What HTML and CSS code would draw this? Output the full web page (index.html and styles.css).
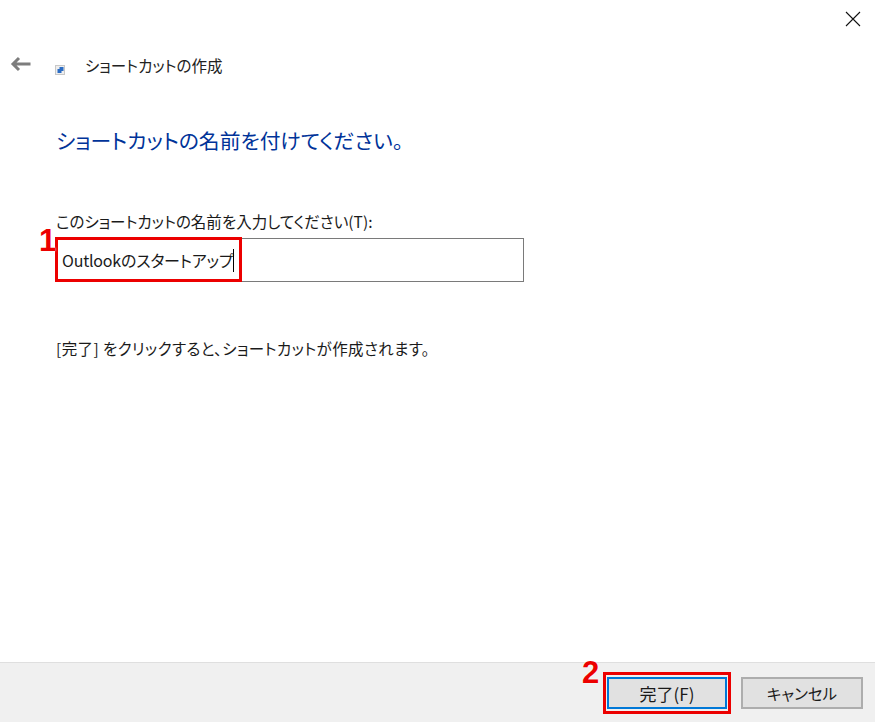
FILE: index.html
```html
<!DOCTYPE html>
<html lang="ja">
<head>
<meta charset="utf-8">
<title>ショートカットの作成</title>
<link rel="stylesheet" href="styles.css">
</head>
<body>
<div class="dialog">
  <div class="titlebar">
    <svg class="close" width="16" height="16" viewBox="0 0 16 16"><path d="M1 1L15 15M15 1L1 15" stroke="#111" stroke-width="1.1" fill="none"/></svg>
  </div>
  <div class="nav">
    <svg class="back" width="21" height="16" viewBox="0 0 21 16"><path d="M20.500 8H3M9 2L3 8L9 14" stroke="#7d7d7d" stroke-width="3" fill="none"/></svg>
    <svg class="appicon" width="10" height="10" viewBox="0 0 10 10"><rect x=".5" y=".5" width="9" height="9" fill="#eee" stroke="#c8c8c8"/><path d="M2.500 8V4H4.500V2H8.500V6H6.500V8Z" fill="#2b6cc4"/></svg>
    <span class="navtitle">ショートカットの作成</span>
  </div>
  <main class="content">
    <h1 class="heading">ショートカットの名前を付けてください。</h1>
    <label class="label">このショートカットの名前を入力してください(T):</label>
    <div class="field">
      <span class="value">Outlookのスタートアップ</span><span class="caret"></span>
      <div class="mark mark-field"></div>
      <span class="num num-1">1</span>
    </div>
    <p class="hint">[完了] をクリックすると、ショートカットが作成されます。</p>
  </main>
  <footer class="footer">
    <div class="btnwrap">
      <button class="btn primary">完了(F)</button>
      <div class="mark mark-btn"></div>
      <span class="num num-2">2</span>
    </div>
    <button class="btn">キャンセル</button>
  </footer>
</div>
</body>
</html>
```
FILE: styles.css
```css
* { box-sizing: border-box; }
html, body { margin: 0; height: 100%; background: #fff; }
body { font-family: "Noto Sans CJK JP", "Liberation Sans", sans-serif; font-feature-settings: "palt"; color: #1a1a1a; overflow: hidden; }
.dialog { width: 875px; height: 722px; display: flex; flex-direction: column; }
.titlebar { height: 46px; display: flex; justify-content: flex-end; padding: 11px 14px 0 0; }
.close { display: block; }
.nav { height: 38px; display: flex; align-items: center; padding-left: 10px; }
.back { display: block; margin-top: -2px; }
.appicon { display: block; margin: 9px 0 0 24px; }
.navtitle { font-size: 15.5px; margin-left: 20px; line-height: 20px; margin-top: -1px; color: #222; }
.content { flex: 1; padding: 0 0 0 56px; }
.heading { margin: 41px 0 0; font-size: 20.8px; font-weight: 400; line-height: 30px; color: #003399; }
.label { display: block; margin-top: 56px; font-size: 15.5px; line-height: 20px; }
.field { position: relative; margin-top: 7px; width: 468px; height: 44px; border: 1px solid #7a7a7a; display: flex; align-items: center; padding: 0 0 0 5px; font-size: 16px; }
.value { white-space: nowrap; letter-spacing: -.2px; }
.caret { width: 1px; height: 23px; background: #000; margin-left: 0; }
.hint { margin: 56px 0 0; font-size: 15.5px; line-height: 20px; letter-spacing: .4px; }
.footer { height: 60px; background: #f0f0f0; border-top: 1px solid #dfdfdf; display: flex; justify-content: flex-end; align-items: flex-start; gap: 14px; padding: 14px 12px 0 0; }
.btnwrap { position: relative; }
.btn { display: block; width: 122px; height: 32px; background: #e1e1e1; border: 2px solid #adadad; font-family: inherit; font-feature-settings: inherit; font-size: 15.5px; color: #1a1a1a; padding: 0; }
.primary { width: 120px; border-color: #0078d7; font-size: 17px; }
.mark { position: absolute; border: 3px solid #ec0000; pointer-events: none; }
.mark-field { left: -2px; top: -2px; width: 187px; height: 45px; }
.mark-btn { left: -4px; top: -5px; width: 128px; height: 42px; }
.num { position: absolute; font-family: "Liberation Sans", sans-serif; font-weight: 700; font-size: 31px; line-height: 31px; color: #ec0000; text-shadow: 0 0 2px #fff; }
.num-1 { left: -18px; top: -14px; }
.num-2 { left: -25px; top: -20px; }
```
